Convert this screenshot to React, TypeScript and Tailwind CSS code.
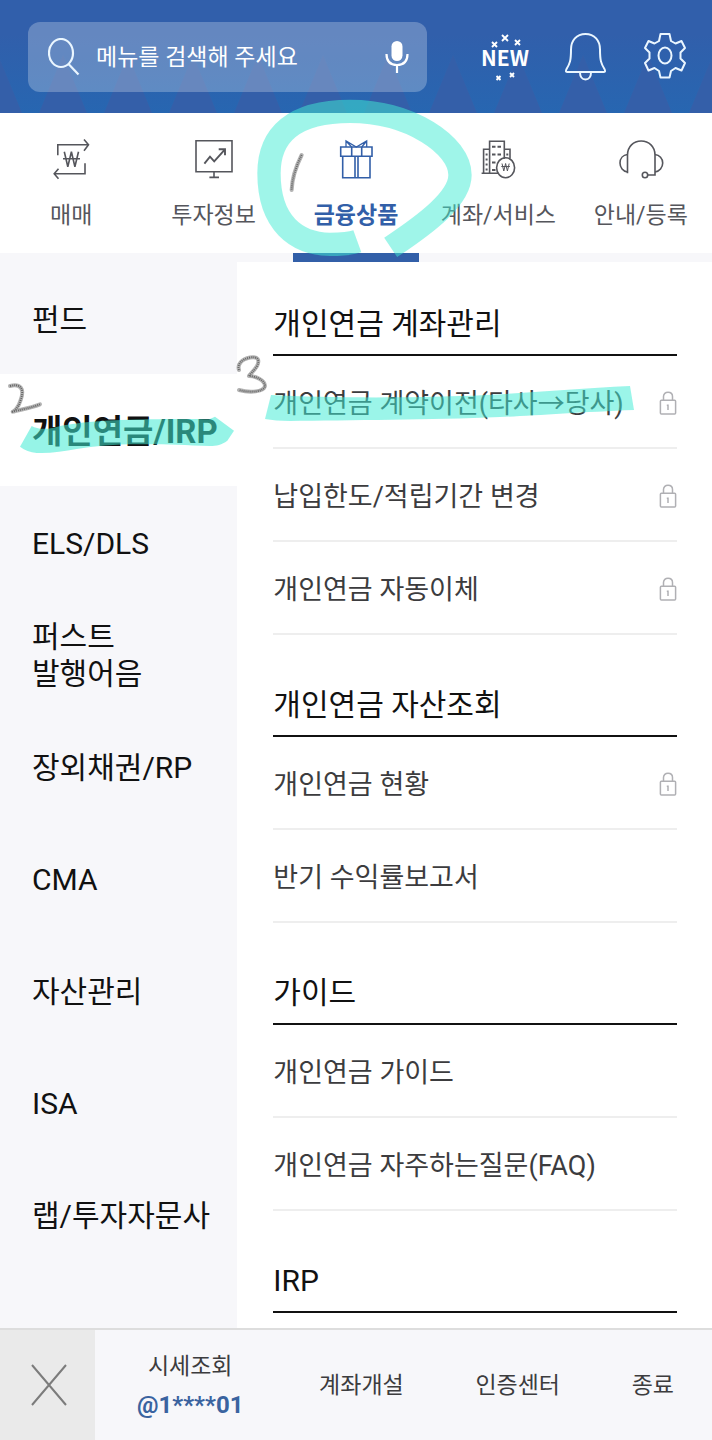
import type { ReactNode } from "react";

interface MenuItem {
  label: string;
  locked?: boolean;
  marked?: boolean;
}

interface MenuSection {
  title: string;
  items: MenuItem[];
}

const TABS = [
  { label: "매매", icon: TradeIcon },
  { label: "투자정보", icon: MonitorIcon },
  { label: "금융상품", icon: GiftIcon },
  { label: "계좌/서비스", icon: BuildingIcon },
  { label: "안내/등록", icon: HeadsetIcon },
];
const ACTIVE_TAB = "금융상품";

const CATEGORIES = [
  "펀드",
  "개인연금/IRP",
  "ELS/DLS",
  "퍼스트\n발행어음",
  "장외채권/RP",
  "CMA",
  "자산관리",
  "ISA",
  "랩/투자자문사",
];
const ACTIVE_CATEGORY = "개인연금/IRP";

const SECTIONS: MenuSection[] = [
  {
    title: "개인연금 계좌관리",
    items: [
      { label: "개인연금 계약이전(타사→당사)", locked: true, marked: true },
      { label: "납입한도/적립기간 변경", locked: true },
      { label: "개인연금 자동이체", locked: true },
    ],
  },
  {
    title: "개인연금 자산조회",
    items: [{ label: "개인연금 현황", locked: true }, { label: "반기 수익률보고서" }],
  },
  {
    title: "가이드",
    items: [{ label: "개인연금 가이드" }, { label: "개인연금 자주하는질문(FAQ)" }],
  },
  { title: "IRP", items: [] },
];

function TabSvg({ children }: { children: ReactNode }) {
  return (
    <svg
      viewBox="0 0 40 40"
      className="size-10 overflow-visible"
      fill="none"
      stroke="currentColor"
      strokeWidth="1.6"
      aria-hidden="true"
    >
      {children}
    </svg>
  );
}

function TradeIcon() {
  return (
    <TabSvg>
      <path d="M6.8 16.3V5.7H37M33 .5l4.5 5.2-4.5 6M34 24.3v10.4H3.5M7.5 29.7l-4.3 5 4.3 5" />
      <path d="M13.3 12.7l3.5 15 3.6-15 3.5 15 3.6-15M12 19.7h17" />
    </TabSvg>
  );
}

function MonitorIcon() {
  return (
    <TabSvg>
      <path d="M2 1.7h36v31H2zM20 32.7v5.6M15.4 38.4H25" />
      <path d="M10.4 24.7l5.6-7 4.2 4.6L31 10.3M24.7 10.3H31v6" strokeWidth="1.9" />
    </TabSvg>
  );
}

function GiftIcon() {
  return (
    <TabSvg>
      <path d="M4.7 8H36v9.3H4.7zM6.7 17.3V38.7H34V17.3M15.7 8v9.3M25.7 8v9.3M19 17.3v21.4M22 17.3v21.4" />
      <path d="M10 8V2l10.3 6 10.4-6v6M10 2l5.7 6M30.7 2l-5 6" strokeWidth="1.3" />
    </TabSvg>
  );
}

function BuildingIcon() {
  return (
    <TabSvg>
      <path d="M11.6 34.3v-32h14.7v17.5M11.6 10.3h-6v24M26.3 10.3H32v9.2M3.6 34.3H20" />
      <path d="M14 7.8h3.5M19.5 7.8H23M14 15.5h3.5M19.5 15.5H23M14 23.5h3.5M14 31h3.5" strokeWidth="1.9" />
      <path d="M7.6 15.5h2M7.6 20.5h2M7.6 25.5h2M7.6 30.5h2M28.3 15.5h2" strokeWidth="1.9" />
      <ellipse cx="27.6" cy="28.7" rx="9" ry="10" />
      <path d="M24 24.5l1.8 7.5 1.8-7.5 1.8 7.5 1.8-7.5M23.3 27.5h8.6" strokeWidth="1" />
    </TabSvg>
  );
}

function HeadsetIcon() {
  return (
    <TabSvg>
      <path d="M6.5 34.3V16C6.5 7.5 12.5 2 20.2 2S34 7.5 34 16v20h-7" />
      <path d="M6.5 15.5C2 16 -1 19.5 -1 24s3 8.5 7.5 9M34 15.5c4.5.5 7.7 4 7.7 8.5s-3.2 8.5-7.7 9" />
      <circle cx="24" cy="36" r="2.7" />
    </TabSvg>
  );
}

function LockIcon() {
  return (
    <svg
      viewBox="0 0 18 24"
      className="h-6 w-[18px] shrink-0 text-[#b0b0b4]"
      fill="none"
      stroke="currentColor"
      strokeWidth="1.5"
      role="img"
      aria-label="잠김"
    >
      <rect x="1.4" y="9.3" width="15.2" height="13.8" rx="1" />
      <path d="M4.5 9.3V5.5C4.5 2.8 6.5 1.2 9 1.2s4.5 1.6 4.5 4.3v3.8" />
      <path d="M9 13.5v5.5M7.8 14.3h1.5" />
    </svg>
  );
}

/* Blue zigzag strip behind the search bar */
function HeaderPattern() {
  return (
    <svg className="absolute inset-0 size-full" aria-hidden="true">
      <defs>
        <linearGradient id="glow" x1="0" y1="0" x2="0" y2="1">
          <stop offset="0.3" stopColor="#315fab" />
          <stop offset="1" stopColor="#2766b1" />
        </linearGradient>
        <pattern id="peaks" x="31" width="65" height="113" patternUnits="userSpaceOnUse">
          <path d="M32 55L56 113H8z" fill="#345fa9" />
        </pattern>
      </defs>
      <rect width="100%" height="100%" fill="url(#glow)" />
      <rect width="100%" height="100%" fill="url(#peaks)" />
    </svg>
  );
}

function PencilStroke({ d, scale = 1 }: { d: string; scale?: number }) {
  return (
    <g fill="none" strokeLinejoin="round">
      <path d={d} stroke="#b4b4b4" strokeWidth={4 * scale} strokeLinecap="round" />
      <path d={d} stroke="#666" strokeWidth={2 * scale} strokeDasharray={`${scale} ${scale}`} />
    </g>
  );
}

function TabMark() {
  return (
    <svg
      viewBox="0 0 750 540"
      className="pointer-events-none absolute -top-[18px] -left-[45px] z-20 h-[180px] w-[250px]"
      aria-hidden="true"
    >
      <path
        d="M352 439C330 447 300 448 270 448C170 446 87 385 87 235C87 120 160 49 330 49C510 49 660 150 660 240C660 310 560 385 452 457"
        fill="none"
        stroke="#40ebd4"
        strokeOpacity="0.5"
        strokeWidth="70"
      />
      <PencilStroke d="M185 180C170 210 156 250 155 285" scale={3} />
    </svg>
  );
}

function CategoryMark() {
  return (
    <svg
      viewBox="0 0 810 450"
      className="pointer-events-none absolute -top-6 left-0 z-10 h-[150px] w-[270px]"
      aria-hidden="true"
    >
      <path
        d="M95 228C110 236 130 240 160 233C230 216 330 209 450 208C520 207 590 207 628 208L645 200L702 242L682 272C665 284 650 288 630 288C560 286 500 283 440 283C350 282 290 287 230 297C190 304 150 311 110 309C90 306 75 301 60 290z"
        fill="#40ebd4"
        fillOpacity="0.55"
      />
      <PencilStroke d="M30 108C60 100 75 115 62 150C55 175 40 185 38 185C55 180 90 175 120 163" scale={3} />
    </svg>
  );
}

function ItemMark() {
  return (
    <svg
      viewBox="0 0 410 90"
      className="pointer-events-none absolute -top-4 -left-[43px] z-10 h-[90px] w-[410px]"
      aria-hidden="true"
    >
      <path
        d="M41 55C90 58 180 58 230 56C290 54 340 49 400 46L404 70C350 72 300 76 270 77C200 80 120 80 60 81C50 81 42 80 35 79z"
        fill="#40ebd4"
        fillOpacity="0.52"
      />
      <PencilStroke d="M9 30C7 24 12 19 20 17.5C28 16 30 20 27 26C24 31 20 34 19 36C25 36 35 40 35 46C34 52 20 53 9 50" />
    </svg>
  );
}

function NewBadge() {
  return (
    <span className="relative block text-center text-[21px] leading-[46px] font-bold">
      NEW
      <svg
        viewBox="0 0 50 50"
        className="absolute top-0 left-0 size-[50px]"
        fill="none"
        stroke="currentColor"
        strokeWidth="1.9"
        aria-hidden="true"
      >
        <path d="M22 1l6 6M28 1l-6 6" />
        <path d="M12 8l5 5M17 8l-5 5M35 6l5 5M40 6l-5 5M30 39l4 4M34 39l-4 4M16.500 42l4 4M20.500 42l-4 4" />
      </svg>
    </span>
  );
}

export default function App() {
  return (
    <div className="flex min-h-screen flex-col bg-white font-['Roboto','Noto_Sans_CJK_KR',sans-serif] text-[#111]">
      {/* Search header */}
      <header className="relative flex h-[113px] items-center bg-[#315fab] pr-[22px] pl-7 text-white">
        <HeaderPattern />
        <label className="relative mr-[53px] flex h-[70px] min-w-0 flex-1 items-center rounded-xl bg-white/25 pr-[18px] pl-5">
          <svg viewBox="0 0 32 38" className="h-[38px] w-8 shrink-0" fill="none" stroke="#eaf6ff" strokeWidth="2.2" aria-hidden="true">
            <ellipse cx="13" cy="15" rx="12" ry="14" />
            <path d="M20.5 26L30.5 36.5" />
          </svg>
          <input
            type="search"
            aria-label="메뉴 검색"
            placeholder="메뉴를 검색해 주세요"
            className="ml-4 min-w-0 flex-1 bg-transparent pt-1 text-[23px] text-white outline-none placeholder:text-white"
          />
          <svg viewBox="0 0 24 32" className="h-8 w-6 shrink-0" fill="none" stroke="white" strokeWidth="2.2" aria-hidden="true">
            <rect x="6.5" y="0" width="11" height="20" rx="5.5" fill="white" stroke="none" />
            <path d="M1.500 13c0 7 3.500 11 10.500 11s10.500-4 10.500-11M12 24v8" />
          </svg>
        </label>
        <div className="relative flex gap-[30px]">
          <button type="button" className="size-[50px] font-['Noto_Sans_CJK_KR',sans-serif]">
            <NewBadge />
          </button>
          <button type="button" className="size-[50px]" aria-label="알림">
            <svg viewBox="0 0 50 50" fill="none" stroke="#eaf6ff" strokeWidth="2" strokeLinejoin="round">
              <path d="M25.500 2C16.500 2 11 8.500 11 17.500C11 28.500 10 31.500 6.300 37.500C5.500 39.500 6 40 7.500 40H43.500C45 40 45.500 39.500 44.700 37.500C41 31.500 40 28.500 40 17.500C40 8.500 34.500 2 25.500 2z" />
              <path d="M20 40.500C20 44.500 22 47.500 25.500 47.500S31 44.500 31 40.500" />
            </svg>
          </button>
          <button type="button" className="size-[50px]" aria-label="설정">
            <svg viewBox="0 0 50 50" fill="none" stroke="#eaf6ff" strokeWidth="2" strokeLinejoin="round">
              <path d="M20.5 2H29.5L31 9L35.5 11.5L41.5 9L45 16L40.5 20.5V26.5L45 31L41.500 38.500L35.500 36L31 39L29.500 45.500H20.500L19 39L14.500 36L8.500 38.500L5 31L9.500 26.500V20.500L5 16L8.500 9L14.500 11.500L19 9z" />
              <ellipse cx="25" cy="23.500" rx="6.500" ry="8" />
            </svg>
          </button>
        </div>
      </header>

      {/* Main tabs */}
      <nav className="grid grid-cols-5 border-b-[9px] border-[#f7f7fa]">
        {TABS.map(({ label, icon: Icon }) => {
          const isActive = label === ACTIVE_TAB;
          return (
            <button
              key={label}
              type="button"
              className={`relative flex h-[140px] flex-col items-center gap-4 pt-[26px] text-[23px] leading-[42px] whitespace-nowrap ${
                isActive ? "font-bold text-[#325fa8]" : "text-[#55565c]"
              }`}
            >
              <Icon />
              {label}
              {isActive && (
                <>
                  <span className="absolute inset-x-2 -bottom-[9px] h-[9px] bg-[#325fa8]" />
                  <TabMark />
                </>
              )}
            </button>
          );
        })}
      </nav>

      <div className="flex flex-1">
        {/* Categories */}
        <aside className="w-1/3 shrink-0 bg-[#f7f7fa]">
          {CATEGORIES.map((name) => {
            const isActive = name === ACTIVE_CATEGORY;
            return (
              <button
                key={name}
                type="button"
                className={`relative flex h-28 w-full items-center pt-0.5 pl-8 text-left leading-[37px] whitespace-pre ${
                  isActive ? "bg-white text-[33px] font-bold" : "text-[30px]"
                }`}
              >
                {name}
                {isActive && <CategoryMark />}
              </button>
            );
          })}
        </aside>

        {/* Menu list */}
        <main className="min-w-0 flex-1 pr-[35px] pb-[15px] pl-9">
          {SECTIONS.map(({ title, items }) => (
            <section key={title} className="group">
              <h2 className="border-b-2 border-[#111] pt-[50px] pb-2.5 text-[30px] leading-10 group-first:pt-[42px]">
                {title}
              </h2>
              <ul>
                {items.map(({ label, locked, marked }) => (
                  <li key={label} className="relative border-b-2 border-[#eee]">
                    <a href="#" className="flex h-[91px] items-center justify-between pt-0.5 text-[27px] whitespace-nowrap text-[#3c3c3e]">
                      <span className="pt-1">{label}</span>
                      {locked && <LockIcon />}
                    </a>
                    {marked && <ItemMark />}
                  </li>
                ))}
              </ul>
            </section>
          ))}
        </main>
      </div>

      {/* Bottom bar */}
      <footer className="flex h-28 border-t-2 border-[#ddd] bg-[#f7f7fa] text-[23px] text-[#3c3c3e]">
        <button type="button" className="flex w-[95px] shrink-0 items-center justify-center bg-[#eaeaea] pl-0.5" aria-label="닫기">
          <svg viewBox="0 0 36 42" className="h-[42px] w-9" fill="none" stroke="#7c7c7c" strokeWidth="2">
            <path d="M1 1l34 40M35 1L1 41" />
          </svg>
        </button>
        <div className="flex flex-1 items-center justify-between px-[38px] pt-0.5">
          <button type="button" className="px-1 leading-[38px]">
            시세조회
            <span className="block text-2xl leading-[38px] font-bold text-[#3a639f]">@1****01</span>
          </button>
          <button type="button">계좌개설</button>
          <button type="button">인증센터</button>
          <button type="button">종료</button>
        </div>
      </footer>
    </div>
  );
}
